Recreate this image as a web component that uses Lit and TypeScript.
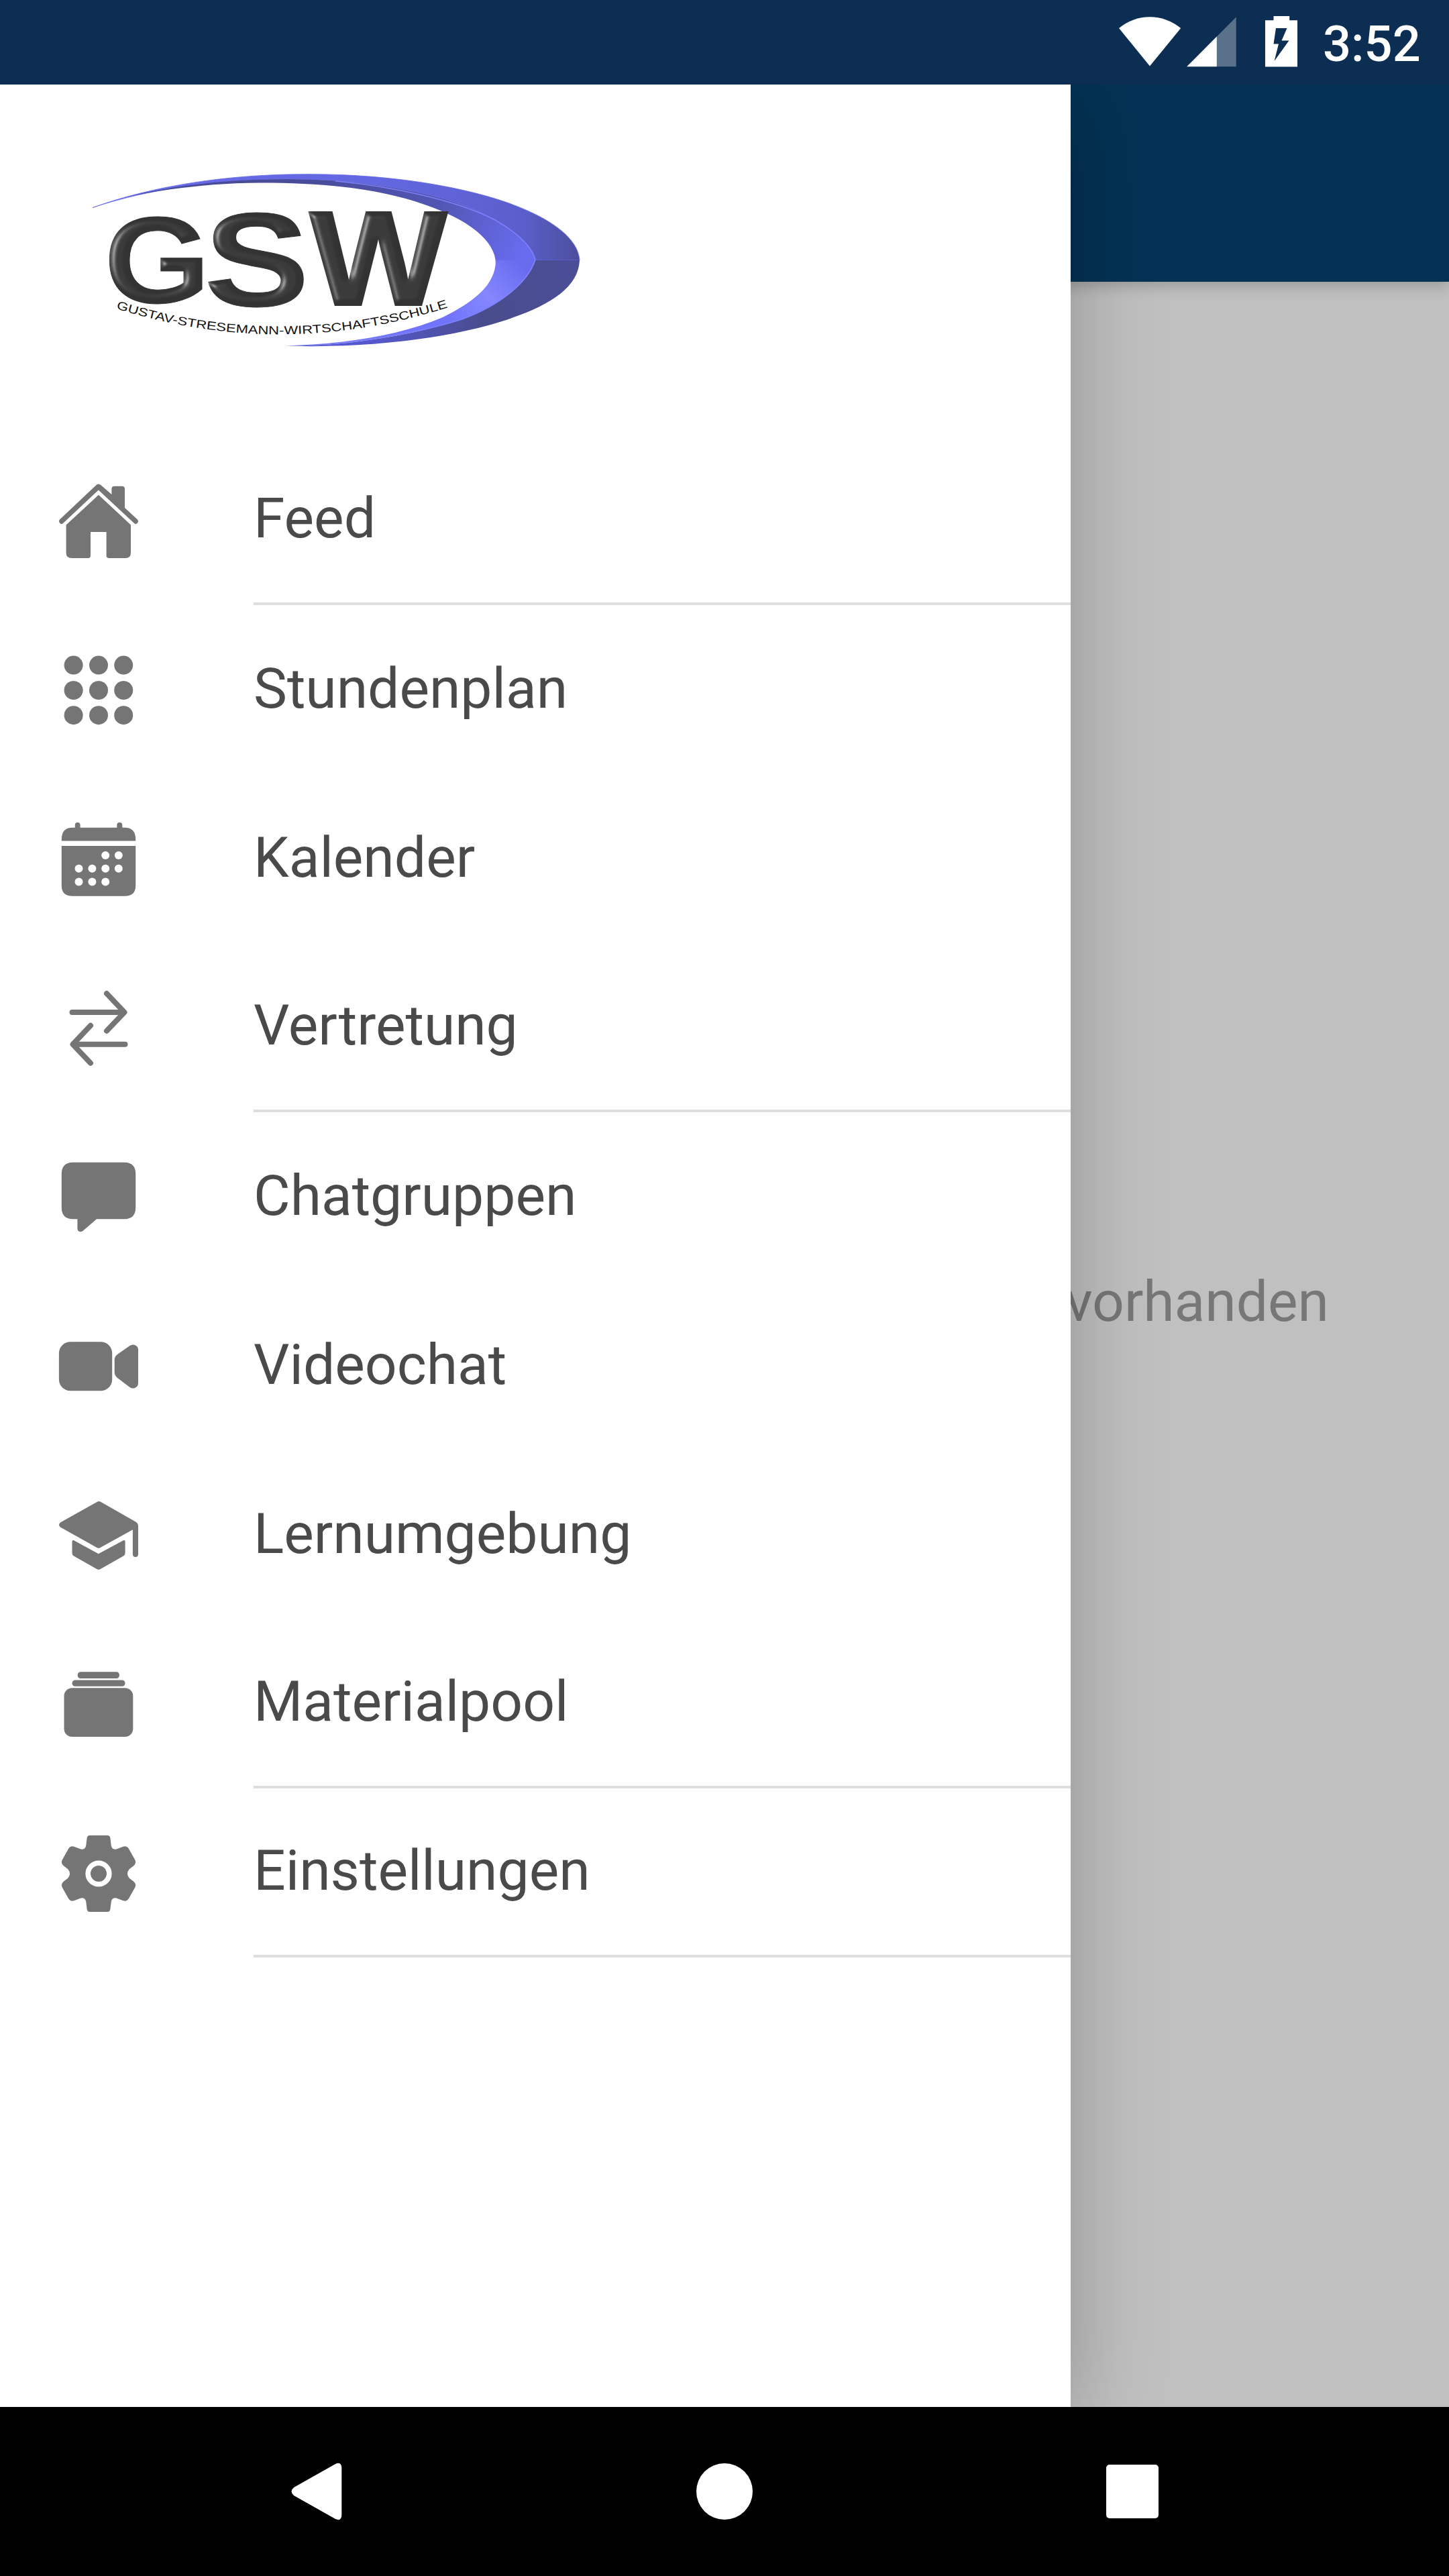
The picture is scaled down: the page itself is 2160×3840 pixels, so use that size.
import { html, css, svg, LitElement, SVGTemplateResult } from 'lit';
import { customElement, property } from 'lit/decorators.js';
import { classMap } from 'lit/directives/class-map.js';

interface MenuEntry {
  label: string;
  icon: string;
  divider?: boolean;
}

const icons: Record<string, SVGTemplateResult> = {
  home: svg`
    <path d="M56.5 6Q59.8 3 63.2 6L79.4 20V12Q79.4 7.7 83.5 7.7H95Q99 7.7 99 12V40L118 57.5Q120 60 118 62.500Q115.500 65.500 113 63L59.800 13.500L7 63Q4.500 65.500 2 62.500Q0 60 2 57.500Z" />
    <path d="M59.8 21Q61 21 63 23.500L108 65.500V107Q108 115 100 115H75.500Q71.600 115 71.600 111V76H48V111Q48 115 44.500 115H20Q11.600 115 11.600 107V65.500L57 23.500Q58.500 21 59.800 21Z" />
  `,
  grid: svg`${[22.6, 60, 97.2].map(y => [22.6, 60, 97.2].map(x => svg`<circle cx=${x} cy=${y} r="14" />`))}`,
  calendar: svg`
    <path d="M4.800 32.500V30Q5 12.700 21 12.700H24.800V9Q24.800 5 28.700 5T32.600 9V12.700H87.300V9Q87.300 5 91.300 5T95.300 9V12.700H99Q115 12.700 115.200 30V32.500Z" />
    <path d="M4.800 40H115.200V99Q115.200 114.800 99 114.800H21Q4.800 114.800 4.800 99Z" />
    <g fill="#fff">
      ${[[70.2, 54], [89.8, 54], [30.5, 73.8], [50.4, 73.8], [70.2, 73.8], [89.8, 73.8], [30.5, 93.6], [50.4, 93.6], [70.2, 93.6]].map(
        ([x, y]) => svg`<circle cx=${x} cy=${y} r="6" />`
      )}
    </g>
  `,
  swap: svg`
    <path
      d="M20.500 36H98M72 8L98.500 36L72 63.700M99.500 83.700H22M48 55.700L21.500 83.700L48 111.700"
      fill="none" stroke="currentColor" stroke-width="8" stroke-linecap="round" stroke-linejoin="round"
    />
  `,
  chat: svg`
    <path d="M21.500 7.700H98.500Q115.200 8 115.200 25V75Q115.200 92 98.500 92.300H57L37 109.500Q33.500 112.500 30.500 110.500Q28.400 109.500 28.400 106V92.300H21.500Q4.800 92 4.800 75V25Q4.800 8 21.500 7.700Z" />
  `,
  video: svg`
    <rect x=".9" y="23.300" width="79.300" height="73" rx="17" />
    <path d="M88 42L106.500 29Q110.500 26.500 114 28Q119 30 119 34.500V85Q119 90 114 92Q110.500 93.500 106.500 91L88 77Q83.700 73.500 83.700 68.500V50Q83.700 45 88 42Z" />
  `,
  school: svg`
    <path d="M57.500 10Q60.500 7.800 63.500 10L116 40Q119 42 119 45V87.500Q119 92 115 92T110.900 87.500V51.200L63.500 77.600Q60 80 56.500 77.600L3 47.500Q-1 44 3 40.500Z" />
    <path d="M20.500 68.500Q21.500 66 24.500 68L59.800 87.300L95.500 68Q99 66 99.600 68.500V86Q99.600 89 97 90.500L63.500 109.600Q60 112 56.500 109.600L23 90.500Q20.500 89 20.500 86Z" />
  `,
  folder: svg`
    <rect x="28.700" y="11.300" width="62.200" height="9.700" rx="4.500" />
    <rect x="20.500" y="23.400" width="79" height="9.400" rx="4.500" />
    <rect x="8.500" y="35.300" width="102.800" height="72.700" rx="12" />
  `,
  gear: svg`
    <path d="M47 3H73Q77 3 77.400 7L78.600 17Q79.500 25 86.500 23.500L96.500 19.800Q102 18 105 23L114 39Q117 44.500 112 48.500L106 53Q100 60 106 67L112 71.500Q117 75.500 114 81L105 97Q102 102 96.500 100.200L86.500 96.500Q79.500 95 78.600 103L77.400 113Q77 117 73 117H47Q43 117 42.600 113L41.400 103Q40.500 95 33.500 96.500L23.500 100.200Q18 102 15 97L6 81Q3 75.500 8 71.500L14 67Q20 60 14 53L8 48.500Q3 44.500 6 39L15 23Q18 18 23.500 19.800L33.500 23.500Q40.500 25 41.400 17L42.600 7Q43 3 47 3Z" />
    <circle cx="60" cy="60" r="15.800" fill="none" stroke="#fff" stroke-width="7.600" />
  `,
};

@customElement('menu-item')
export class MenuItem extends LitElement {
  static styles = css`
    :host {
      display: flex;
      height: 252px;
    }

    .icon {
      width: 120px;
      height: 120px;
      margin: 67px 171px 0 87px;
      color: #757575;
      fill: currentColor;
    }

    .label {
      flex: 1;
      display: flex;
      align-items: center;
      box-sizing: border-box;
      color: #4a4a4a;
      font-size: 84px;
      line-height: 98px;
      padding-bottom: 3px;
    }

    .divider {
      border-bottom: 4px solid #dedede;
    }
  `;

  @property() icon = '';
  @property() label = '';
  @property({ type: Boolean }) divider = false;

  protected render() {
    return html`
      <svg class="icon" viewBox="0 0 120 120">${icons[this.icon]}</svg>
      <span class=${classMap({ label: true, divider: this.divider })}>${this.label}</span>
    `;
  }
}

@customElement('school-logo')
export class SchoolLogo extends LitElement {
  static styles = css`
    :host {
      display: block;
      width: 726px;
      height: 258px;
    }

    svg {
      display: block;
      overflow: visible;
    }

    .initials {
      font: bold 200px 'Liberation Sans', Arial, sans-serif;
      fill: #333;
      stroke: #333;
    }

    .name {
      font: 17.5px 'Liberation Sans', Arial, sans-serif;
      fill: #111;
    }
  `;

  protected render() {
    return html`
      <svg width="726" height="258" viewBox="0 0 726 258">
        <defs>
          <linearGradient id="outer-top" gradientUnits="userSpaceOnUse" x1="0" y1="0" x2="726" y2="0">
            <stop offset="0" stop-color="#686bea" />
            <stop offset=".6" stop-color="#6367e0" />
            <stop offset=".88" stop-color="#5b5fcc" />
            <stop offset="1" stop-color="#4c4f9c" />
          </linearGradient>
          <linearGradient id="outer-bottom" gradientUnits="userSpaceOnUse" x1="690" y1="130" x2="420" y2="250">
            <stop offset="0" stop-color="#4b4e96" />
            <stop offset=".45" stop-color="#494c8c" />
            <stop offset="1" stop-color="#5558cc" />
          </linearGradient>
          <linearGradient id="inner-top" gradientUnits="userSpaceOnUse" x1="300" y1="10" x2="640" y2="130">
            <stop offset="0" stop-color="#484b98" />
            <stop offset=".6" stop-color="#5256b2" />
            <stop offset="1" stop-color="#696cf0" />
          </linearGradient>
          <linearGradient id="inner-bottom" gradientUnits="userSpaceOnUse" x1="630" y1="125" x2="530" y2="220">
            <stop offset="0" stop-color="#686bee" />
            <stop offset=".5" stop-color="#8587ff" />
            <stop offset="1" stop-color="#7073fb" />
          </linearGradient>
          <filter id="bevel" x="-5%" y="-5%" width="110%" height="110%" color-interpolation-filters="sRGB">
            <feGaussianBlur in="SourceAlpha" stdDeviation="5" result="soft" />
            <feSpecularLighting in="soft" surfaceScale="8" specularConstant=".85" specularExponent="16" lighting-color="#999" result="shine">
              <feDistantLight azimuth="195" elevation="28" />
            </feSpecularLighting>
            <feComposite in="shine" in2="SourceAlpha" operator="in" result="edge" />
            <feMerge>
              <feMergeNode in="SourceGraphic" />
              <feMergeNode in="edge" />
            </feMerge>
          </filter>
          <path id="arc" d="M35 201Q290 281 545 194" />
        </defs>

        <path
          fill="url(#outer-top)" stroke="#686bea" stroke-width=".8"
          d="M0 50.500C90 18 200 1 315 .700C420 0 520 13 600 37C680 62 724 95 726 129L660 129C650 95 590 48 480 27C410 12 350 8 290 8C180 8 80 24 0 50.500Z"
        />
        <path
          fill="url(#inner-top)"
          d="M40 37C120 17 200 8 290 8C350 8 410 12 480 27C590 48 650 95 660 129L601 134C601 100 560 68 495 46C430 23 350 13.500 250 13.500C170 14 100 24 40 37Z"
        />
        <path
          fill="url(#inner-bottom)"
          d="M601 129C601 165 570 190 522 214C460 240 380 254 288 256.500C380 257 470 242 549 217.500C610 196 650 160 660 127Z"
        />
        <path
          fill="url(#outer-bottom)"
          d="M726 129C724 175 670 203 590 226C500 250 390 260 288 256.500C380 257 470 242 549 217.500C610 196 650 160 660 129Z"
        />
        <path
          fill="none" stroke="#7d80fa" stroke-width="1.500"
          d="M362 11C440 18 540 38 600 69C640 92 656 112 660 128C650 160 610 196 549 217.500C500 233 440 245 362 253"
        />

        <g class="initials" filter="url(#bevel)">
          <text transform="translate(17 191.500) scale(1.020 .92)">G</text>
          <text transform="translate(166 196.500) scale(1.180 .99)">S</text>
          <text transform="translate(324 195) scale(1.080 .990)" stroke-width="4">W</text>
        </g>

        <text class="name" textLength="503" lengthAdjust="spacingAndGlyphs">
          <textPath href="#arc">GUSTAV-STRESEMANN-WIRTSCHAFTSSCHULE</textPath>
        </text>
      </svg>
    `;
  }
}

@customElement('status-bar')
export class StatusBar extends LitElement {
  static styles = css`
    :host {
      display: flex;
      justify-content: flex-end;
      height: 126px;
      background-color: #0b2e52;
      color: #fff;
    }

    .time {
      width: 148px;
      margin: 22px 40px 0 32px;
      font-size: 74px;
      font-weight: 500;
      line-height: 88px;
    }
  `;

  protected render() {
    return html`
      <svg width="280" height="126" viewBox="1660 0 280 126" fill="#fff">
        <path d="M1668 42Q1689 25.300 1714 25.300T1760.200 42L1714 98.500Z" />
        <path d="M1842.700 25.500V99.300H1769.200Z" fill-opacity=".32" />
        <path d="M1813.800 54.600V99.300H1769.200Z" />
        <path
          fill-rule="evenodd"
          d="M1898.500 24H1922.200V30.300H1934V99.500H1886V30.300H1898.500ZM1902 42L1898.500 65.500H1906L1899.600 91L1921.500 60.500H1910.500L1918.500 42Z"
        />
      </svg>
      <span class="time">3:52</span>
    `;
  }
}

@customElement('app-root')
export class AppRoot extends LitElement {
  static styles = css`
    :host {
      display: flex;
      flex-direction: column;
      width: 2160px;
      height: 3840px;
      overflow: hidden;
      font-family: Roboto, 'Liberation Sans', sans-serif;
    }

    .screen {
      flex: 1;
      position: relative;
      display: flex;
      flex-direction: column;
      overflow: hidden;
      background-color: #c0c0c0;
    }

    .toolbar {
      height: 294px;
      background-color: #043254;
      box-shadow: 0 7px 20px rgba(0, 0, 0, 0.2);
    }

    .empty {
      flex: 1;
      display: flex;
      justify-content: flex-end;
      align-items: flex-start;
      padding: 1472px 179px 0 0;
      color: #777;
      font-size: 84px;
      line-height: 98px;
    }

    /* the drawer lies over the page */
    .drawer {
      position: absolute;
      inset: 0 auto 0 0;
      width: 1596px;
      background-color: #fff;
      box-shadow: 0 20px 125px rgba(0, 0, 0, 0.25);
    }

    header {
      box-sizing: border-box;
      height: 524px;
      padding: 133px 0 0 138px;
    }

    footer {
      height: 252px;
      background-color: #000;
    }
  `;

  private readonly entries: MenuEntry[] = [
    { label: 'Feed', icon: 'home', divider: true },
    { label: 'Stundenplan', icon: 'grid' },
    { label: 'Kalender', icon: 'calendar' },
    { label: 'Vertretung', icon: 'swap', divider: true },
    { label: 'Chatgruppen', icon: 'chat' },
    { label: 'Videochat', icon: 'video' },
    { label: 'Lernumgebung', icon: 'school' },
    { label: 'Materialpool', icon: 'folder', divider: true },
    { label: 'Einstellungen', icon: 'gear', divider: true },
  ];

  protected render() {
    return html`
      <status-bar></status-bar>

      <div class="screen">
        <div class="toolbar"></div>
        <div class="empty">vorhanden</div>

        <nav class="drawer">
          <header><school-logo></school-logo></header>
          ${this.entries.map(
            entry => html`<menu-item icon=${entry.icon} label=${entry.label} ?divider=${entry.divider}></menu-item>`
          )}
        </nav>
      </div>

      <footer>
        <svg width="2160" height="252" viewBox="0 0 2160 252" fill="#fff">
          <path d="M438 120L500 85Q509 81 509.300 91V161Q509 171 500 167L438 132Q431 126 438 120Z" />
          <circle cx="1080" cy="126" r="42" />
          <rect x="1649" y="86" width="78" height="80" rx="5" />
        </svg>
      </footer>
    `;
  }
}
